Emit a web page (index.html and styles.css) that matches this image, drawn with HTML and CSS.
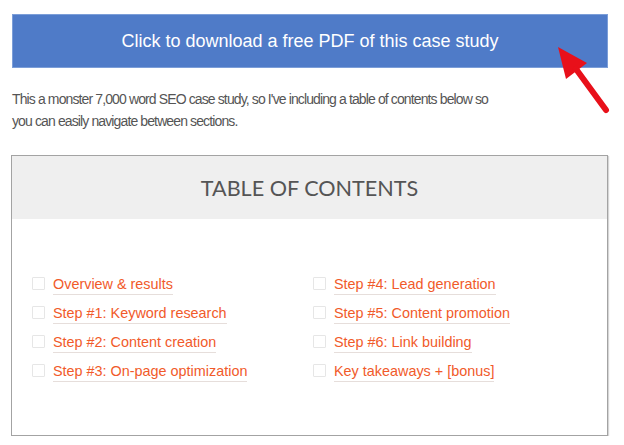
FILE: index.html
```html
<!DOCTYPE html>
<html>
<head>
<meta charset="utf-8">
<link rel="stylesheet" href="styles.css">
</head>
<body>
<div class="page">
  <a class="download" href="#">Click to download a free PDF of this case study</a>
  <p class="intro">This a monster 7,000 word SEO case study, so I've including a table of contents below so you can easily navigate between sections.</p>
  <div class="toc">
    <div class="toc-head">TABLE OF CONTENTS</div>
    <ul class="toc-list">
      <li><span class="check"></span><a href="#">Overview &amp; results</a></li>
      <li><span class="check"></span><a href="#">Step #4: Lead generation</a></li>
      <li><span class="check"></span><a href="#">Step #1: Keyword research</a></li>
      <li><span class="check"></span><a href="#">Step #5: Content promotion</a></li>
      <li><span class="check"></span><a href="#">Step #2: Content creation</a></li>
      <li><span class="check"></span><a href="#">Step #6: Link building</a></li>
      <li><span class="check"></span><a href="#">Step #3: On-page optimization</a></li>
      <li><span class="check"></span><a href="#">Key takeaways + [bonus]</a></li>
    </ul>
  </div>
  <svg class="arrow" width="60" height="72" viewBox="0 0 60 72">
    <polygon points="2,3 31,19 10,35" fill="#e8101a"/>
    <line x1="20" y1="25" x2="50" y2="66" stroke="#e8101a" stroke-width="6" stroke-linecap="round"/>
  </svg>
</div>
</body>
</html>
```

FILE: styles.css
```css
html, body {
  margin: 0;
  padding: 0;
  background: #fff;
}
.page {
  position: relative;
  width: 597px;
  padding: 14px 0 0 11px;
  font-family: "Liberation Sans", Arial, sans-serif;
}
.download {
  display: flex;
  align-items: center;
  justify-content: center;
  box-sizing: border-box;
  height: 54px;
  margin-left: 1px;
  background: #4f7bc8;
  border: 1px solid #7c9ed8;
  color: #fff;
  font-size: 18px;
  text-decoration: none;
}
.intro {
  margin: 21px 0 0 1px;
  max-width: 492px;
  color: #555;
  font-size: 14px;
  letter-spacing: -0.88px;
  line-height: 21.5px;
}
.toc {
  margin-top: 23px;
  border: 1px solid #a3a3a3;
  box-shadow: 1px 1px 1px #d6d6d6;
  height: 281px;
  box-sizing: border-box;
}
.toc-head {
  height: 63px;
  display: flex;
  align-items: center;
  justify-content: center;
  background: #efefef;
  color: #555;
  font-family: Lato, "Liberation Sans", sans-serif;
  font-size: 21.6px;
  padding-top: 1px;
  box-sizing: border-box;
}
.toc-list {
  list-style: none;
  margin: 0;
  padding: 55px 0 0 20px;
  display: grid;
  grid-template-columns: 281px 281px;
  row-gap: 7px;
}
.toc-list li {
  display: flex;
  align-items: center;
  gap: 8px;
  height: 22px;
}
.check {
  width: 11px;
  height: 11px;
  border: 1px solid #e6e6e6;
  border-radius: 1px;
  margin-top: -3px;
  flex: none;
}
.toc-list a {
  color: #f15a2a;
  font-size: 14.4px;
  text-decoration: none;
  border-bottom: 1px solid #e6dedb;
  padding-bottom: 1px;
  line-height: 17px;
}
.arrow {
  position: absolute;
  left: 556px;
  top: 44px;
}
```
